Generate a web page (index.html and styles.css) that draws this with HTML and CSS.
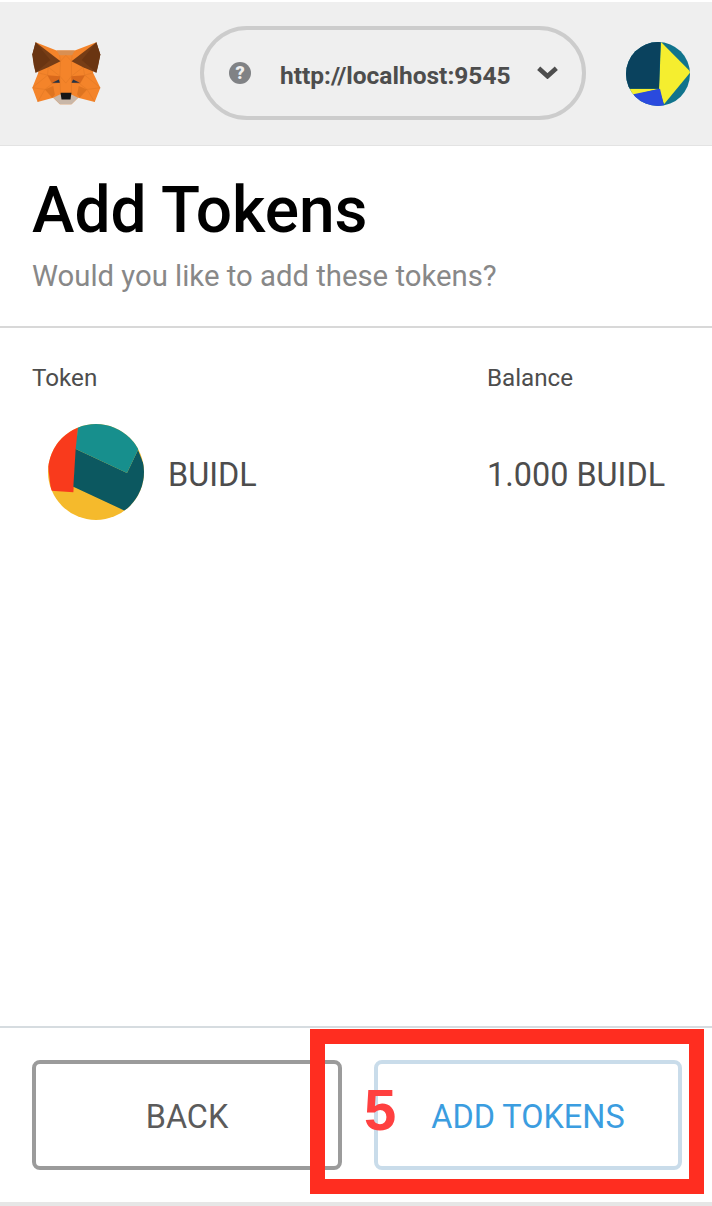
FILE: index.html
```html
<!DOCTYPE html>
<html lang="en">
<head>
<meta charset="utf-8">
<title>Add Tokens</title>
<link rel="stylesheet" href="styles.css">
</head>
<body>
<div class="app">
  <header class="topbar">
    <svg class="fox" viewBox="90 120 215 205" aria-hidden="true">
      <polygon fill="#f4842a" points="106,127 169,152 224,152 289,127 279,219 301,264 284,307 234,294 214,314 179,314 159,294 112,307 96,264 114,219"/>
      <polygon fill="#d98f52" points="169,152 224,152 216,166 178,166"/>
      <polygon fill="#763d16" points="106,127 181,184 144,202 106,219 100,195 96,164"/>
      <polygon fill="#763d16" points="289,127 214,184 249,202 289,219 295,195 301,164"/>
      <polygon fill="#6a3512" points="106,127 150,180 106,219 96,164"/>
      <polygon fill="#6a3512" points="289,127 245,180 289,219 301,164"/>
      <polygon fill="#d9691c" points="142,226 179,229 179,249 156,252"/>
      <polygon fill="#d9691c" points="254,226 214,229 214,249 239,252"/>
      <polygon fill="#de7420" points="134,269 159,259 164,284 156,294"/>
      <polygon fill="#de7420" points="261,269 236,259 231,284 239,294"/>
      <polygon fill="#c9b7a8" points="159,294 179,284 214,284 234,294 214,314 179,314"/>
      <polygon fill="#161616" points="181,279 214,279 211,299 184,299"/>
      <polygon fill="#233447" points="156,249 176,239 179,249"/>
      <polygon fill="#233447" points="214,249 219,239 239,249"/>
      <g class="fox-lines">
        <polyline points="96,264 142,226 156,252 134,269 112,307"/>
        <polyline points="301,264 254,226 239,252 261,269 284,307"/>
        <polyline points="114,219 142,226 144,202 179,229 181,279"/>
        <polyline points="279,219 254,226 249,202 214,229 214,279"/>
        <polyline points="134,269 96,264"/>
        <polyline points="261,269 301,264"/>
        <polyline points="181,184 197,166 214,184 214,229"/>
        <polyline points="181,184 179,229"/>
        <polyline points="178,166 181,184"/>
        <polyline points="216,166 214,184"/>
        <polyline points="179,229 197,250 214,229"/>
      </g>
    </svg>
    <div class="network">
      <span class="help">?</span>
      <span class="network-name">http://localhost:9545</span>
      <svg class="chevron" viewBox="0 0 24 14" aria-hidden="true"><polyline points="2.5,2.5 12,11 21.5,2.5"/></svg>
    </div>
    <svg class="avatar" viewBox="48 35 192 192" aria-hidden="true">
      <defs><clipPath id="avatar-clip"><circle cx="144" cy="131" r="96"/></clipPath></defs>
      <g clip-path="url(#avatar-clip)">
        <rect x="48" y="35" width="192" height="192" fill="#10738c"/>
        <polygon fill="#f5ee2f" points="153,35 242,125 162,222 147,175"/>
        <polygon fill="#f5ee2f" points="48,175 147,175 70,195"/>
        <polygon fill="#2a4ade" points="70,192 150,175 164,235 70,235"/>
        <polygon fill="#0a425e" points="40,25 152,25 147,175 40,175"/>
      </g>
    </svg>
  </header>

  <section class="heading">
    <h1 class="title">Add Tokens</h1>
    <p class="subtitle">Would you like to add these tokens?</p>
  </section>

  <main class="content">
    <div class="row labels">
      <span class="col-token">Token</span>
      <span class="col-balance">Balance</span>
    </div>
    <div class="row token">
      <div class="col-token token-cell">
        <svg class="token-icon" viewBox="55 40 288 288" aria-hidden="true">
          <defs><clipPath id="token-clip"><circle cx="199" cy="184" r="144"/></clipPath></defs>
          <g clip-path="url(#token-clip)">
            <rect x="55" y="40" width="288" height="288" fill="#f5ba2c"/>
            <polygon fill="#f93a1c" points="145,50 131,245 64,240 40,40"/>
            <polygon fill="#0c5860" points="138,115 292,187 325,118 350,180 350,270 285,300 131,228"/>
            <polygon fill="#178f8d" points="145,50 180,30 340,30 325,118 292,187 138,115"/>
          </g>
        </svg>
        <span class="token-text">BUIDL</span>
      </div>
      <span class="col-balance token-text">1.000 BUIDL</span>
    </div>
  </main>

  <footer class="actions">
    <button class="btn btn-back" type="button">BACK</button>
    <button class="btn btn-add" type="button">ADD TOKENS</button>
  </footer>
</div>
<div class="callout"><span class="callout-num">5</span></div>
</body>
</html>
```
FILE: styles.css
```css
* { box-sizing: border-box; }
html, body { margin: 0; padding: 0; background: #e6e6e6; }
body { position: relative; width: 712px; height: 1206px; overflow: hidden; font-family: Roboto, "Liberation Sans", sans-serif; }
.app { display: flex; flex-direction: column; height: 1202px; padding-top: 2px; background: #fff; }
.topbar { flex: none; display: flex; align-items: center; height: 144px; padding: 0 22px 0 30px; background: #efefef; border-bottom: 1px solid #e3e3e3; }
.fox { flex: none; width: 72px; height: 68px; margin-top: 1px; }
.fox-lines { fill: none; stroke: #c8691f; stroke-width: 1.2; opacity: .6; }
.network { flex: none; display: flex; align-items: center; width: 386px; height: 94px; margin: -1px 40px 0 98px; padding-left: 25px; border: 4px solid #ccc; border-radius: 47px; }
.help { flex: none; width: 22px; height: 22px; margin-top: -1px; border-radius: 50%; background: #808285; color: #efefef; font-size: 18px; font-weight: 900; line-height: 22px; text-align: center; }
.network-name { flex: none; margin: 4px 0 0 29px; color: #4d4d4d; font-size: 24.5px; font-weight: 700; white-space: nowrap; }
.chevron { flex: none; width: 23px; height: 13px; margin: -2px 0 0 25px; }
.chevron polyline { fill: none; stroke: #4d4d4d; stroke-width: 5; }
.avatar { flex: none; width: 64px; height: 64px; }
.heading { flex: none; height: 182px; padding: 29px 32px 0; border-bottom: 2px solid #d8d8d8; }
.title { margin: 0; color: #000; font-size: 64px; font-weight: 500; line-height: 72px; }
.subtitle { margin: 9px 0 0; color: #888; font-size: 29.3px; line-height: 40px; }
.content { flex: 1; padding: 0 32px; color: #4d4d4d; }
.row { display: flex; align-items: center; }
.labels { height: 30px; margin-top: 35px; font-size: 24.2px; }
.token { margin-top: 31px; font-size: 32.4px; }
.token-text { padding-top: 6px; }
.col-token { flex: none; width: 455px; }
.col-balance { white-space: nowrap; }
.token-cell { display: flex; align-items: center; gap: 24px; padding-left: 16px; }
.token-icon { flex: none; width: 96px; height: 96px; }
.actions { flex: none; display: flex; gap: 32px; height: 176px; padding: 32px 30px 0 32px; border-top: 2px solid #d6dce0; }
.btn { height: 110px; padding: 4px 0 0; border-radius: 8px; background: #fff; font-family: inherit; font-size: 32.4px; }
.btn-back { flex: 310 1 0; border: 4px solid #9b9b9b; color: #5b5b5b; }
.btn-add { flex: 308 1 0; border: 4px solid #c9dcea; color: #3b9de0; }
.callout { position: absolute; left: 310px; top: 1029px; width: 394px; height: 165px; border: 15px solid #ff2d20; }
.callout-num { position: absolute; left: 39px; top: 37px; color: #ff4040; font-family: "Liberation Sans", sans-serif; font-size: 58px; font-weight: 700; line-height: 58px; }
```
